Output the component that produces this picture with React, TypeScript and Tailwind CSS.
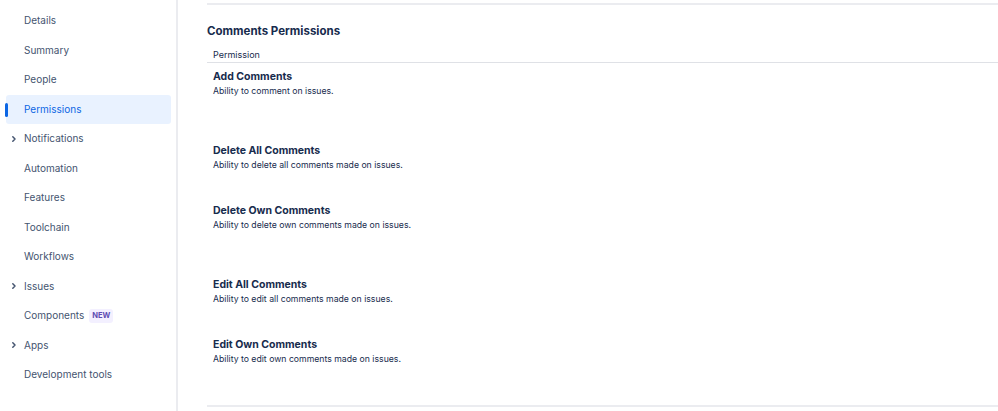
import React from "react";

const navItems: { label: string; chevron?: boolean; active?: boolean; badge?: string }[] = [
  { label: "Details" },
  { label: "Summary" },
  { label: "People" },
  { label: "Permissions", active: true },
  { label: "Notifications", chevron: true },
  { label: "Automation" },
  { label: "Features" },
  { label: "Toolchain" },
  { label: "Workflows" },
  { label: "Issues", chevron: true },
  { label: "Components", badge: "NEW" },
  { label: "Apps", chevron: true },
  { label: "Development tools" },
];

const rows = [
  { title: "Add Comments", desc: "Ability to comment on issues.", h: "h-[74px]" },
  { title: "Delete All Comments", desc: "Ability to delete all comments made on issues.", h: "h-[60px]" },
  { title: "Delete Own Comments", desc: "Ability to delete own comments made on issues.", h: "h-[74px]" },
  { title: "Edit All Comments", desc: "Ability to edit all comments made on issues.", h: "h-[60px]" },
  { title: "Edit Own Comments", desc: "Ability to edit own comments made on issues.", h: "h-[74px]" },
];

function Chevron() {
  return (
    <svg width="8" height="8" viewBox="0 0 8 8" className="absolute left-[4px] top-1/2 -translate-y-1/2">
      <path d="M2.8 1.8 L5 4 L2.8 6.2" fill="none" stroke="#44546f" strokeWidth="1.5" strokeLinecap="round" strokeLinejoin="round" />
    </svg>
  );
}

export default function App() {
  return (
    <div
      className="flex w-[998px] h-[411px] bg-white overflow-hidden text-[#172b4d]"
      style={{ fontFamily: "Inter, 'Noto Sans', sans-serif" }}
    >
      <aside className="w-[178px] shrink-0 border-r-2 border-[#ebecf0] pt-[6px] pl-[6px] pr-[5px]">
        {navItems.map((it) => (
          <div
            key={it.label}
            className={`relative flex items-center h-[29.5px] pl-[18px] rounded-[3px] text-[10px] ${
              it.active ? "bg-[#e9f2ff] text-[#0c66e4]" : "text-[#44546f]"
            }`}
          >
            {it.active && (
              <span className="absolute left-[-1px] top-[8px] h-[14px] w-[3px] rounded-full bg-[#0c66e4]" />
            )}
            {it.chevron && <Chevron />}
            <span>{it.label}</span>
            {it.badge && (
              <span className="ml-[5px] px-[3px] h-[14px] flex items-center rounded-[3px] bg-[#f3f0ff] text-[#5e4db2] text-[7.5px] font-bold">
                {it.badge}
              </span>
            )}
          </div>
        ))}
      </aside>
      <main className="flex-1 pl-[29px] pt-[3px]">
        <div className="h-[2px] bg-[#ebecf0]" />
        <h2 className="mt-[18px] text-[11.5px] font-bold leading-[16px]">Comments Permissions</h2>
        <div className="mt-[8px] pl-[6px] h-[15px] flex items-center text-[9px] text-[#172b4d]">Permission</div>
        <div className="h-[1px] bg-[#dfe1e6]" />
        {rows.map((r) => (
          <div key={r.title} className={`${r.h} pl-[6px] pt-[7px]`}>
            <div className="text-[10.5px] font-bold leading-[14px]">{r.title}</div>
            <div className="text-[8.7px] leading-[12px] mt-[1px]">{r.desc}</div>
          </div>
        ))}
        <div className="h-[2px] bg-[#ebecf0]" />
      </main>
    </div>
  );
}
